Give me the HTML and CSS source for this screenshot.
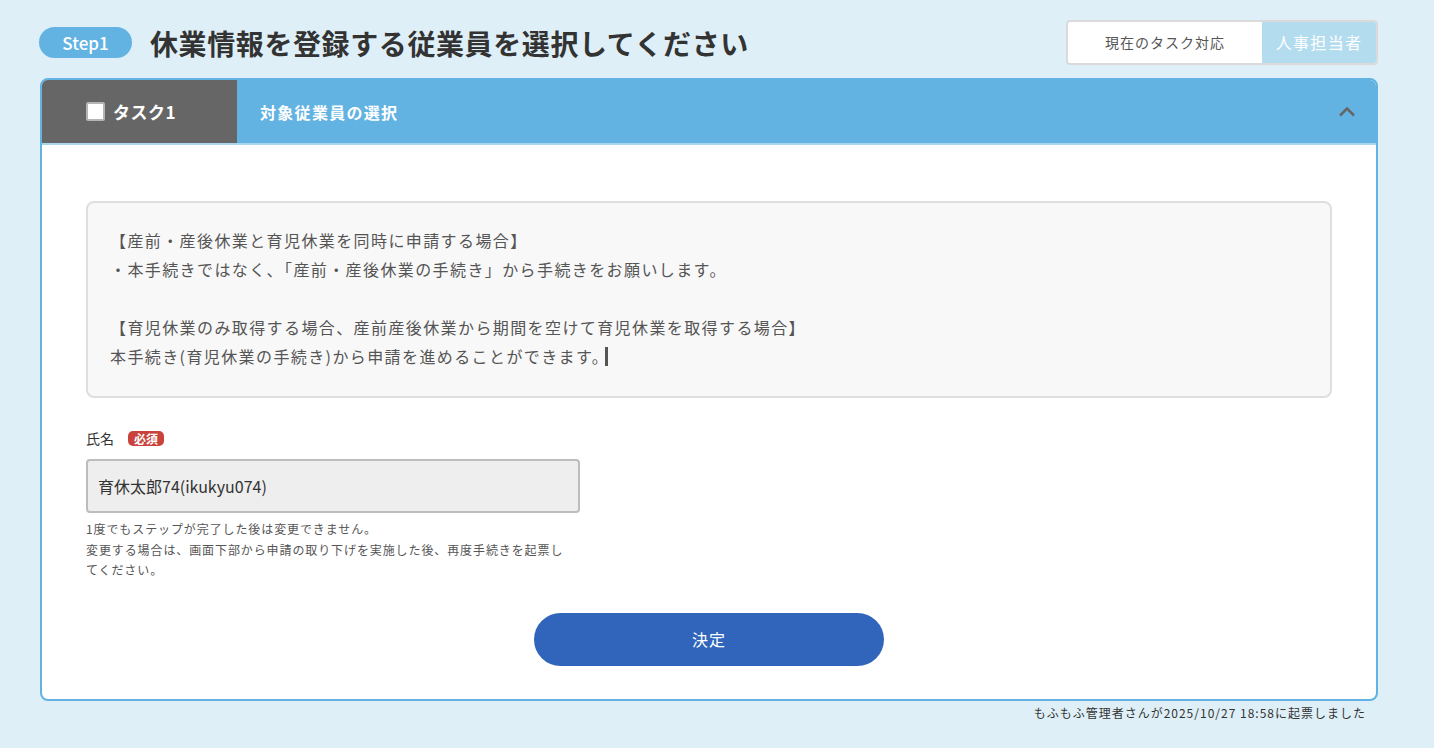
FILE: index.html
```html
<!DOCTYPE html>
<html lang="ja">
<head>
    <meta charset="UTF-8">
    <title>休業情報の登録</title>
    <link rel="stylesheet" href="styles.css">
</head>
<body>
    <div class="page">
        <!-- Step title and task owner -->
        <div class="page-head">
            <div class="step-title">
                <span class="step-badge">Step1</span>
                <h1>休業情報を登録する従業員を選択してください</h1>
            </div>
            <div class="owner">
                <span class="owner-label">現在のタスク対応</span>
                <span class="owner-role">人事担当者</span>
            </div>
        </div>

        <!-- Task card -->
        <div class="task-card">
            <div class="task-header">
                <div class="task-tab">
                    <span class="task-check"></span>
                    <span>タスク1</span>
                </div>
                <div class="task-name">対象従業員の選択</div>
                <svg class="chevron" width="18" height="11" viewBox="0 0 18 11">
                    <path d="M2 9.5 L9 2.5 L16 9.5" fill="none" stroke="#666" stroke-width="2.5"/>
                </svg>
            </div>

            <div class="task-body">
                <div class="notice">
                    <p>【産前・産後休業と育児休業を同時に申請する場合】</p>
                    <p>・本手続きではなく、「産前・産後休業の手続き」から手続きをお願いします。</p>
                    <p>&nbsp;</p>
                    <p>【育児休業のみ取得する場合、産前産後休業から期間を空けて育児休業を取得する場合】</p>
                    <p>本手続き(育児休業の手続き)から申請を進めることができます。<span class="cursor"></span></p>
                </div>

                <div class="field">
                    <label class="field-label">氏名 <span class="required">必須</span></label>
                    <div class="field-input">育休太郎74(ikukyu074)</div>
                    <p class="field-help">1度でもステップが完了した後は変更できません。<br>変更する場合は、画面下部から申請の取り下げを実施した後、再度手続きを起票してください。</p>
                </div>

                <div class="actions">
                    <button type="button" class="submit">決定</button>
                </div>
            </div>
        </div>

        <p class="footnote">もふもふ管理者さんが2025/10/27 18:58に起票しました</p>
    </div>
</body>
</html>
```

FILE: styles.css
```css
/* Base */
body {
    margin: 0;
    background: #dfeff7;
    color: #333;
    font-family: "Noto Sans CJK JP", "Noto Sans", sans-serif;
}

.page {
    width: 1338px;
    padding: 20px 0 0 40px;
}

/* Header row */
.page-head {
    display: flex;
    justify-content: space-between;
    align-items: center;
}

.step-title {
    display: flex;
    align-items: center;
}

.step-badge {
    width: 93px;
    height: 31px;
    margin-left: -1px;
    border-radius: 16px;
    background: #63b3e2;
    color: #fff;
    font-size: 17px;
    font-weight: 500;
    line-height: 31px;
    text-align: center;
}

h1 {
    margin: 0 0 0 18px;
    font-size: 28px;
    font-weight: bold;
    letter-spacing: 0.6px;
    color: #333;
    line-height: 40px;
}

.owner {
    display: flex;
    height: 41px;
    border: 2px solid #dadada;
    border-radius: 4px;
    background: #fff;
    overflow: hidden;
}

.owner-label {
    width: 194px;
    font-size: 14px;
    letter-spacing: 1px;
    color: #555;
    line-height: 41px;
    text-align: center;
}

.owner-role {
    width: 114px;
    background: #b3dcef;
    color: #fff;
    font-size: 16px;
    letter-spacing: 1.3px;
    line-height: 41px;
    text-align: center;
}

/* Task card */
.task-card {
    margin-top: 13px;
    border: 2px solid #62b3e2;
    border-radius: 8px;
    background: #fff;
    overflow: hidden;
}

.task-header {
    display: flex;
    align-items: center;
    height: 63px;
    background: #63b3e2;
    border-bottom: 2px solid #a9d5f0;
}

.task-tab {
    display: flex;
    align-items: center;
    width: 151px;
    height: 100%;
    padding-left: 44px;
    background: #666;
    color: #fff;
    font-size: 17px;
    font-weight: bold;
    letter-spacing: 0.5px;
}

.task-check {
    width: 15px;
    height: 15px;
    margin-right: 8px;
    border: 2px solid #b5b5b5;
    border-radius: 2px;
    background: #fff;
}

.task-name {
    flex: 1;
    padding-left: 23px;
    color: #fff;
    font-size: 16px;
    font-weight: bold;
    letter-spacing: 1.3px;
}

.chevron {
    margin-right: 20px;
}

.task-body {
    padding: 56px 44px 33px;
}

/* Notice box */
.notice {
    padding: 23px 22px 25px;
    border: 2px solid #dedede;
    border-radius: 8px;
    background: #f8f8f8;
    color: #555;
    font-size: 16px;
    letter-spacing: 1.4px;
}

.notice p {
    margin: 0;
    line-height: 29px;
}

.cursor {
    display: inline-block;
    width: 3px;
    height: 19px;
    margin-left: -4px;
    background: #555;
    vertical-align: -3px;
}

/* Name field */
.field {
    margin-top: 30px;
}

.field-label {
    display: flex;
    align-items: center;
    font-size: 14px;
    line-height: 20px;
    color: #333;
}

.required {
    margin-left: 14px;
    padding: 0 6px;
    border-radius: 5px;
    background: #c9433c;
    color: #fff;
    font-size: 12px;
    font-weight: bold;
    line-height: 15px;
}

.field-input {
    box-sizing: border-box;
    width: 494px;
    height: 54px;
    margin-top: 11px;
    padding-left: 10px;
    border: 2px solid #bdbdbd;
    border-radius: 4px;
    background: #eee;
    color: #333;
    font-size: 16px;
    line-height: 50px;
}

.field-help {
    width: 486px;
    margin: 6px 0 0;
    color: #555;
    font-size: 12px;
    letter-spacing: 0.9px;
    line-height: 20.5px;
}

/* Submit */
.actions {
    display: flex;
    justify-content: center;
    margin-top: 32px;
}

.submit {
    width: 350px;
    height: 53px;
    border: none;
    border-radius: 27px;
    background: #3165bb;
    color: #fff;
    font-family: inherit;
    font-size: 16px;
    letter-spacing: 1px;
    cursor: pointer;
}

.footnote {
    margin: 4px 12px 0 0;
    color: #333;
    font-size: 12px;
    letter-spacing: 1px;
    line-height: 16px;
    text-align: right;
}
```
